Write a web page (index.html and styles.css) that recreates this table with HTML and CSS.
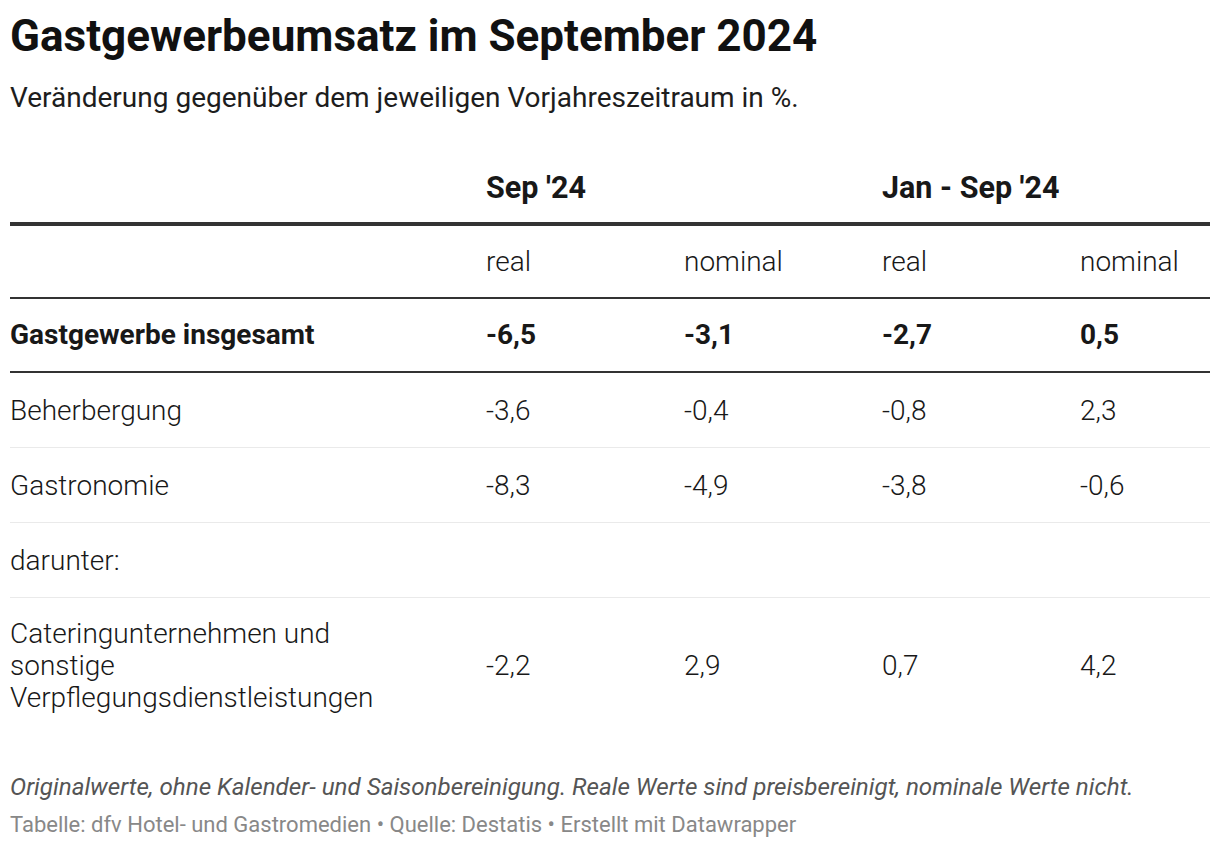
FILE: index.html
```html
<!DOCTYPE html>
<html lang="de">
<head>
<meta charset="utf-8">
<title>Gastgewerbeumsatz im September 2024</title>
<link rel="stylesheet" href="styles.css">
</head>
<body>
<div class="chart">
  <h1 class="title">Gastgewerbeumsatz im September 2024</h1>
  <p class="subtitle">Veränderung gegenüber dem jeweiligen Vorjahreszeitraum in %.</p>
  <div class="table">
    <div class="row head1">
      <div class="cell"></div>
      <div class="cell span2">Sep '24</div>
      <div class="cell span2">Jan - Sep '24</div>
    </div>
    <div class="row head2">
      <div class="cell"></div>
      <div class="cell">real</div>
      <div class="cell">nominal</div>
      <div class="cell">real</div>
      <div class="cell">nominal</div>
    </div>
    <div class="row total">
      <div class="cell">Gastgewerbe insgesamt</div>
      <div class="cell">-6,5</div>
      <div class="cell">-3,1</div>
      <div class="cell">-2,7</div>
      <div class="cell">0,5</div>
    </div>
    <div class="row body">
      <div class="cell">Beherbergung</div>
      <div class="cell">-3,6</div>
      <div class="cell">-0,4</div>
      <div class="cell">-0,8</div>
      <div class="cell">2,3</div>
    </div>
    <div class="row body">
      <div class="cell">Gastronomie</div>
      <div class="cell">-8,3</div>
      <div class="cell">-4,9</div>
      <div class="cell">-3,8</div>
      <div class="cell">-0,6</div>
    </div>
    <div class="row body">
      <div class="cell">darunter:</div>
      <div class="cell"></div>
      <div class="cell"></div>
      <div class="cell"></div>
      <div class="cell"></div>
    </div>
    <div class="row body last">
      <div class="cell label-wrap">Cateringunternehmen und sonstige Verpflegungsdienstleistungen</div>
      <div class="cell">-2,2</div>
      <div class="cell">2,9</div>
      <div class="cell">0,7</div>
      <div class="cell">4,2</div>
    </div>
  </div>
  <p class="notes">Originalwerte, ohne Kalender- und Saisonbereinigung. Reale Werte sind preisbereinigt, nominale Werte nicht.</p>
  <p class="byline">Tabelle: dfv Hotel- und Gastromedien • Quelle: Destatis • Erstellt mit Datawrapper</p>
</div>
</body>
</html>
```

FILE: styles.css
```css
html, body {
  margin: 0;
  padding: 0;
  background: #ffffff;
}

body {
  font-family: Roboto, "Liberation Sans", sans-serif;
  color: #181818;
}

.chart {
  padding: 10px 10px 0 10px;
}

.title {
  margin: 0;
  font-size: 44px;
  line-height: 52px;
  font-weight: 700;
  color: #111;
}

.subtitle {
  margin: 19px 0 0 0;
  font-size: 28px;
  line-height: 34px;
  font-weight: 400;
  color: #1d1d1d;
}

.table {
  margin-top: 57px;
}

.row {
  display: grid;
  grid-template-columns: 476px 198px 198px 198px 130px;
  align-items: center;
}

.cell {
  font-size: 28px;
  line-height: 32px;
  font-weight: 300;
}

.span2 {
  grid-column: span 2;
}

.head1 {
  padding-bottom: 18px;
  border-bottom: 4px solid #333;
}

.head1 .cell {
  font-size: 30.5px;
  font-weight: 700;
}

.head2 {
  padding: 20px 0 19px 0;
  border-bottom: 2px solid #333;
}

.total {
  padding: 20px 0;
  border-bottom: 2px solid #333;
}

.total .cell {
  font-weight: 700;
}

.body {
  padding: 22px 0 20px 0;
  border-bottom: 1px solid #eaeaea;
}

.body.last {
  padding: 20px 0;
  border-bottom: none;
}

.label-wrap {
  padding-right: 80px;
}

.notes {
  margin: 39px 0 0 0;
  font-size: 24.2px;
  line-height: 28px;
  font-style: italic;
  color: #555;
}

.byline {
  margin: 11px 0 0 0;
  font-size: 22px;
  line-height: 26px;
  color: #888;
}
```
